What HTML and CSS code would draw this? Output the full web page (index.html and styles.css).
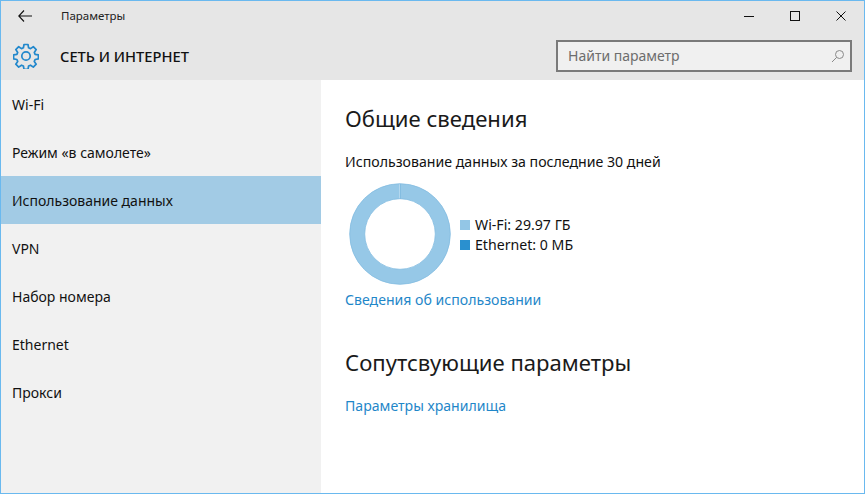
FILE: index.html
```html
<!DOCTYPE html>
<html lang="ru">
<head>
<meta charset="utf-8">
<title>Параметры</title>
<link rel="stylesheet" href="styles.css">
</head>
<body>
<div class="window">
  <header class="header">
    <div class="titlebar">
      <button class="back" aria-label="Назад">
        <svg width="14" height="12" viewBox="0 0 14 12"><path d="M6 .5.8 6 6 11.500M.8 6H14" fill="none" stroke="#111" stroke-width="1.100"/></svg>
      </button>
      <span class="app-title">Параметры</span>
      <div class="controls">
        <span class="ctl"><svg width="12" height="12" viewBox="0 0 12 12"><path d="M1 6.500H11" stroke="#111" stroke-width="1"/></svg></span>
        <span class="ctl"><svg width="12" height="12" viewBox="0 0 12 12"><rect x="1.500" y="1.500" width="9" height="9" fill="none" stroke="#111" stroke-width="1"/></svg></span>
        <span class="ctl"><svg width="12" height="12" viewBox="0 0 12 12"><path d="M1.500 1.500 10.500 10.500M10.500 1.500 1.500 10.500" stroke="#111" stroke-width="1"/></svg></span>
      </div>
    </div>
    <div class="pagebar">
      <svg class="gear" width="26" height="26" viewBox="0 0 26 26"><path d="M11 1.500h4l.6 3.300 1.900.8 2.800-1.900 2.900 2.900-1.900 2.800.8 1.900 3.300.6v4l-3.300.6-.8 1.900 1.900 2.800-2.900 2.900-2.800-1.900-1.900.8-.6 3.300h-4l-.6-3.300-1.900-.8-2.800 1.900-2.900-2.900 1.900-2.800-.8-1.900-3.300-.6v-4l3.300-.6.8-1.900-1.900-2.800 2.900-2.900 2.800 1.900 1.900-.8z" fill="none" stroke="#2288cc" stroke-width="1.700" stroke-linejoin="round"/><circle cx="13" cy="13" r="4.200" fill="none" stroke="#2288cc" stroke-width="1.700"/></svg>
      <h1 class="section-title">СЕТЬ И ИНТЕРНЕТ</h1>
      <div class="search">
        <span class="search-text">Найти параметр</span>
        <svg class="search-icon" width="14" height="14" viewBox="0 0 14 14"><circle cx="8.500" cy="5.500" r="4" fill="none" stroke="#8a8a8a" stroke-width="1"/><path d="M5.600 8.400 1 13" stroke="#8a8a8a" stroke-width="1"/></svg>
      </div>
    </div>
  </header>
  <div class="body">
    <nav class="nav">
      <a class="nav-item">Wi-Fi</a>
      <a class="nav-item">Режим «в самолете»</a>
      <a class="nav-item active">Использование данных</a>
      <a class="nav-item">VPN</a>
      <a class="nav-item">Набор номера</a>
      <a class="nav-item">Ethernet</a>
      <a class="nav-item">Прокси</a>
    </nav>
    <main class="main">
      <h2 class="h2">Общие сведения</h2>
      <p class="sub">Использование данных за последние 30 дней</p>
      <div class="usage">
        <svg class="donut" width="102" height="102" viewBox="0 0 102 102">
          <circle cx="51" cy="51" r="42.800" fill="none" stroke="#96c8e7" stroke-width="15"/>
          <path d="M50.500 1V16" stroke="#b3d7ee" stroke-width="1"/>
          <path d="M51.500 1V16" stroke="#84bde1" stroke-width="1"/>
          <circle cx="51" cy="51" r="50.300" fill="none" stroke="#84bde1" stroke-width=".8"/>
          <circle cx="51" cy="51" r="35.300" fill="none" stroke="#84bde1" stroke-width=".8"/>
        </svg>
        <ul class="legend">
          <li class="legend-row"><span class="swatch wifi"></span>Wi-Fi: 29.97 ГБ</li>
          <li class="legend-row"><span class="swatch eth"></span>Ethernet: 0 МБ</li>
        </ul>
      </div>
      <a class="link first">Сведения об использовании</a>
      <h2 class="h2 second">Сопутсвующие параметры</h2>
      <a class="link">Параметры хранилища</a>
    </main>
  </div>
</div>
</body>
</html>
```
FILE: styles.css
```css
* { box-sizing: border-box; }
html, body { margin: 0; height: 100%; }
body { font-family: "Noto Sans", "Open Sans", sans-serif; color: #111; background: #fff; overflow: hidden; }
.window { width: 865px; height: 494px; border: 1px solid #6ab9ef; display: flex; flex-direction: column; }
.header { background: #e6e6e6; height: 79px; flex: none; }
.titlebar { height: 29px; display: flex; align-items: center; }
.back { width: 48px; height: 29px; border: 0; background: none; padding: 0; display: flex; align-items: center; justify-content: center; }
.app-title { font-size: 11.500px; margin-left: 12px; color: #222; }
.controls { margin-left: auto; align-self: flex-start; height: 30px; display: flex; }
.ctl { width: 46px; height: 30px; display: flex; align-items: center; justify-content: center; }
.pagebar { height: 50px; display: flex; align-items: center; padding: 1px 12px 0; }
.gear { flex: none; }
.section-title { font-size: 14.700px; font-weight: 500; margin: 0 0 0 21px; color: #111; }
.search { margin-left: auto; width: 296px; height: 32px; border: 2px solid #7a7a7a; background: #f0f0f0; display: flex; align-items: center; justify-content: space-between; padding: 0 5px 0 10px; }
.search-text { font-size: 14px; color: #6d6d6d; }
.search-icon { flex: none; }
.body { flex: 1; display: flex; min-height: 0; }
.nav { width: 320px; background: #f1f1f1; display: flex; flex-direction: column; flex: none; }
.nav-item { height: 48px; display: flex; align-items: center; padding-left: 11px; font-size: 14px; color: #111; }
.active { background: #a2cbe5; }
.main { flex: 1; padding: 22px 0 0 24px; }
.h2 { font-size: 22.100px; font-weight: 400; line-height: 32px; margin: 0; color: #1a1a1a; }
.second { margin-top: 36px; }
.sub { font-size: 14.150px; line-height: 20px; margin: 18px 0 0; }
.usage { display: flex; align-items: center; margin-top: 11px; margin-left: 4px; }
.legend { list-style: none; margin: 2px 0 0 9px; padding: 0; }
.legend-row { display: flex; align-items: center; gap: 5px; font-size: 14.150px; line-height: 20px; }
.swatch { width: 10px; height: 10px; }
.wifi { background: #93c6e6; }
.eth { background: #2a90cf; }
.link { display: block; font-size: 14.100px; line-height: 20px; color: #1f87c9; }
.first { margin-top: 5px; }
.second + .link { margin-top: 18px; }
```
